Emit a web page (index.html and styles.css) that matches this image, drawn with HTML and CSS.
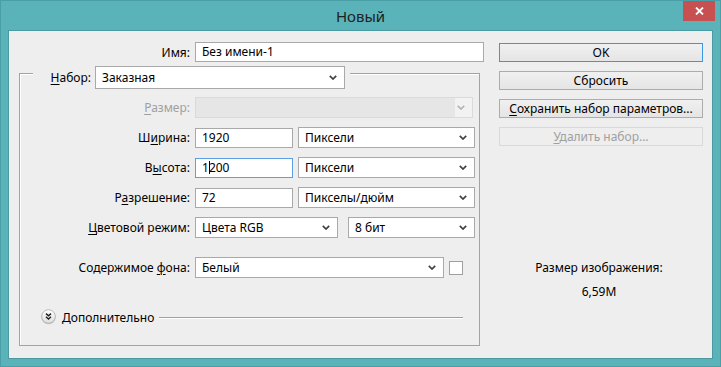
FILE: index.html
```html
<!DOCTYPE html>
<html lang="ru">
<head>
  <meta charset="UTF-8">
  <title>Новый</title>
  <link rel="stylesheet" href="styles.css">
</head>
<body>
  <div class="window">
    <!-- Title bar -->
    <div class="titlebar">
      <span></span>
      <span class="title">Новый</span>
      <div class="close">
        <svg width="9" height="8" viewBox="0 0 9 8"><path d="M1 0.5 L8 7.5 M8 0.5 L1 7.5" stroke="#fff" stroke-width="1.8"/></svg>
      </div>
    </div>

    <div class="client">
      <!-- Form column -->
      <div class="left">
        <div class="row name-row">
          <label class="lbl lbl-name">Имя:</label>
          <div class="field w-name">Без имени-1</div>
        </div>

        <div class="group">
          <div class="legend">
            <label class="lbl lbl-legend"><u>Н</u>абор:</label>
            <div class="select w-preset">Заказная
              <svg class="arrow" width="8" height="5" viewBox="0 0 8 5"><path d="M0.8 0.8 L4 4 L7.2 0.8" fill="none" stroke="#404040" stroke-width="1.7"/></svg>
            </div>
          </div>

          <div class="row first">
            <label class="lbl disabled"><u>Р</u>азмер:</label>
            <div class="select disabled w-size">
              <svg class="arrow" width="8" height="5" viewBox="0 0 8 5"><path d="M0.8 0.8 L4 4 L7.2 0.8" fill="none" stroke="#b4b4b4" stroke-width="1.7"/></svg>
            </div>
          </div>

          <div class="row">
            <label class="lbl">Ш<u>и</u>рина:</label>
            <div class="field w-num">1920</div>
            <div class="select w-unit">Пиксели
              <svg class="arrow" width="8" height="5" viewBox="0 0 8 5"><path d="M0.8 0.8 L4 4 L7.2 0.8" fill="none" stroke="#404040" stroke-width="1.7"/></svg>
            </div>
          </div>

          <div class="row">
            <label class="lbl">В<u>ы</u>сота:</label>
            <div class="field w-num focused">1<span class="caret"></span>200</div>
            <div class="select w-unit">Пиксели
              <svg class="arrow" width="8" height="5" viewBox="0 0 8 5"><path d="M0.8 0.8 L4 4 L7.2 0.8" fill="none" stroke="#404040" stroke-width="1.7"/></svg>
            </div>
          </div>

          <div class="row">
            <label class="lbl">Р<u>а</u>зрешение:</label>
            <div class="field w-num">72</div>
            <div class="select w-unit">Пикселы/дюйм
              <svg class="arrow" width="8" height="5" viewBox="0 0 8 5"><path d="M0.8 0.8 L4 4 L7.2 0.8" fill="none" stroke="#404040" stroke-width="1.7"/></svg>
            </div>
          </div>

          <div class="row">
            <label class="lbl"><u>Ц</u>ветовой режим:</label>
            <div class="select w-mode">Цвета RGB
              <svg class="arrow" width="8" height="5" viewBox="0 0 8 5"><path d="M0.8 0.8 L4 4 L7.2 0.8" fill="none" stroke="#404040" stroke-width="1.7"/></svg>
            </div>
            <div class="select w-bits">8 бит
              <svg class="arrow" width="8" height="5" viewBox="0 0 8 5"><path d="M0.8 0.8 L4 4 L7.2 0.8" fill="none" stroke="#404040" stroke-width="1.7"/></svg>
            </div>
          </div>

          <div class="row bg-row">
            <label class="lbl">Содержимое <u>ф</u>она:</label>
            <div class="select w-bg">Белый
              <svg class="arrow" width="8" height="5" viewBox="0 0 8 5"><path d="M0.8 0.8 L4 4 L7.2 0.8" fill="none" stroke="#404040" stroke-width="1.7"/></svg>
            </div>
            <div class="swatch"></div>
          </div>

          <!-- Advanced expander -->
          <div class="advanced">
            <svg class="expander" width="15" height="16" viewBox="0 0 15 16">
              <defs>
                <linearGradient id="eg" x1="0" y1="0" x2="0" y2="1">
                  <stop offset="0" stop-color="#ffffff"/>
                  <stop offset="1" stop-color="#dedede"/>
                </linearGradient>
              </defs>
              <circle cx="7.5" cy="8.3" r="7" fill="#c8c8c8"/>
              <circle cx="7.5" cy="7.5" r="6.8" fill="url(#eg)" stroke="#a9a9a9" stroke-width="0.8"/>
              <path d="M5 4.6 L7.5 6.8 L10 4.6 M5 7.8 L7.5 10 L10 7.8" fill="none" stroke="#202020" stroke-width="1.4"/>
            </svg>
            <span class="adv-text">Дополнительно</span>
            <div class="adv-line"></div>
          </div>
        </div>
      </div>

      <!-- Buttons column -->
      <div class="right">
        <div class="btn default">OK</div>
        <div class="btn">Сбросить</div>
        <div class="btn"><u>С</u>охранить набор параметров...</div>
        <div class="btn disabled"><u>У</u>далить набор...</div>

        <div class="size-info">
          <div>Размер изображения:</div>
          <div class="size-value">6,59M</div>
        </div>
      </div>
    </div>
  </div>
</body>
</html>
```

FILE: styles.css
```css
body {
  margin: 0;
  font-family: "Noto Sans", Arial, sans-serif;
  font-size: 12px;
  color: #000;
}
.window {
  width: 721px;
  height: 367px;
  box-sizing: border-box;
  border: 1px solid #4a9ea6;
  background: #5bb3ba;
  padding: 0 7px 7px 7px;
  display: flex;
  flex-direction: column;
}
/* Title bar */
.titlebar {
  height: 29px;
  margin: 0 -7px;
  display: grid;
  grid-template-columns: 1fr auto 1fr;
  align-items: center;
}
.title {
  font-size: 15px;
  color: #1c2222;
  padding-top: 1px;
}
.close {
  justify-self: end;
  align-self: start;
  width: 32px;
  height: 20px;
  margin-right: 5px;
  background: #c75050;
  display: flex;
  align-items: center;
  justify-content: center;
}
/* Client area */
.client {
  flex: 1;
  background: #eeeeee;
  border: 1px solid #4b9aa1;
  display: flex;
}
.left {
  width: 475px;
  padding-top: 11px;
}
.row {
  display: flex;
  align-items: center;
  gap: 5px;
  height: 21px;
  margin-top: 9px;
}
.name-row {
  height: 20px;
  margin-top: 0;
}
.lbl {
  width: 170px;
  text-align: right;
  white-space: nowrap;
}
.lbl-name {
  width: 181px;
}
.lbl.disabled {
  color: #a0a0a0;
}
u {
  text-decoration-thickness: 1px;
  text-underline-offset: 2px;
}
.field {
  height: 20px;
  box-sizing: border-box;
  border: 1px solid #a9a9a9;
  background: #fff;
  padding-left: 6px;
  line-height: 18px;
  white-space: nowrap;
}
.field.focused {
  border-color: #5b9fe4;
}
.caret {
  display: inline-block;
  width: 1px;
  height: 13px;
  background: #000;
  vertical-align: -2px;
  margin-right: -1px;
}
.select {
  height: 21px;
  box-sizing: border-box;
  border: 1px solid #a9a9a9;
  background: #fff;
  padding: 0 6px 0 6px;
  display: flex;
  align-items: center;
  justify-content: space-between;
  white-space: nowrap;
}
.select .arrow {
  margin-left: auto;
  margin-right: 1px;
}
.select.disabled {
  border-color: #dadada;
  background: linear-gradient(to right, #e6e6e6 calc(100% - 17px), #f2f2f2 calc(100% - 17px));
}
.w-name { width: 289px; }
.w-preset { width: 250px; height: 23px; }
.w-size { width: 278px; }
.w-num { width: 98px; }
.w-unit { width: 177px; }
.w-mode { width: 143px; }
.w-bits { width: 127px; margin-left: 5px; }
.w-bg { width: 249px; }
.swatch {
  width: 14px;
  height: 14px;
  box-sizing: border-box;
  border: 1px solid #a0a0a0;
  background: #fff;
}
/* Group box */
.group {
  margin: 11px 0 0 10px;
  width: 461px;
  height: 273px;
  box-sizing: border-box;
  border: 1px solid #a3a3a3;
  box-shadow: inset 1px 1px 0 #fff;
}
.legend {
  display: flex;
  width: max-content;
  align-items: center;
  gap: 4px;
  margin: -8px 0 0 13px;
  padding-right: 5px;
  background: #eeeeee;
}
.lbl-legend {
  width: 58px;
}
.row.first {
  margin-top: 8px;
}
.row.bg-row {
  margin-top: 19px;
}
.advanced {
  display: flex;
  align-items: center;
  height: 16px;
  margin: 31px 16px 0 21px;
}
.expander {
  margin-right: 6px;
}
.adv-line {
  flex: 1;
  height: 1px;
  background: #a0a0a0;
  margin-left: 5px;
  box-shadow: 0 1px 0 #fff;
}
/* Buttons column */
.right {
  width: 204px;
  margin-left: 15px;
  padding-top: 12px;
}
.btn {
  height: 19px;
  box-sizing: border-box;
  border: 1px solid #acacac;
  background: linear-gradient(#f0f0f0, #e5e5e5);
  text-align: center;
  line-height: 17px;
  margin-bottom: 9px;
  white-space: nowrap;
}
.btn.default {
  border-color: #3c96e6;
}
.btn.disabled {
  border-color: #d9d9d9;
  background: #eeeeee;
  color: #a0a0a0;
}
.size-info {
  margin-top: 114px;
  text-align: center;
  line-height: 16px;
  padding-right: 4px;
}
.size-value {
  margin-top: 8px;
}
```
